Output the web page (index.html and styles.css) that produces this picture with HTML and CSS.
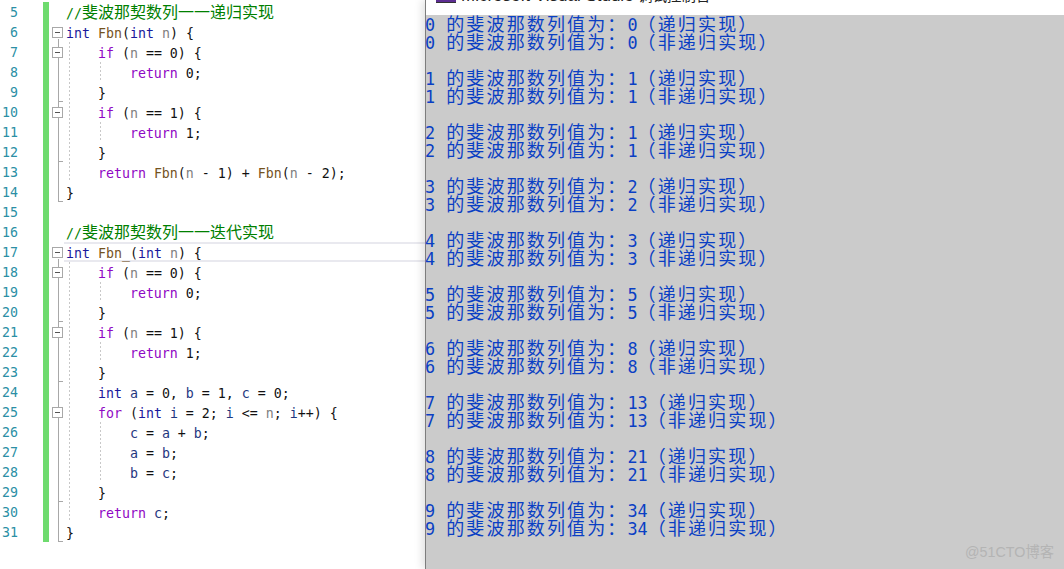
FILE: index.html
```html
<!DOCTYPE html>
<html lang="zh">
<head>
<meta charset="utf-8">
<title>Fbn</title>
<link rel="stylesheet" href="styles.css">
</head>
<body>
<main class="screen">
  <section class="editor">
    <div class="row"><span class="num">5</span><span class="bar"></span><span class="fold"></span><span class="code note"><span class="cm">//<span class="cm-zh">斐波那契数列一一递归实现</span></span></span></div>
    <div class="row"><span class="num">6</span><span class="bar"></span><span class="fold first"><i class="box"></i></span><span class="code"><span class="ty">int</span> <span class="fn">Fbn</span>(<span class="ty">int</span> <span class="pa">n</span>) {</span></div>
    <div class="row"><span class="num">7</span><span class="bar"></span><span class="fold mid"><i class="box"></i></span><span class="code g1">    <span class="kw">if</span> (<span class="pa">n</span> == 0) {</span></div>
    <div class="row"><span class="num">8</span><span class="bar"></span><span class="fold mid"></span><span class="code g12">        <span class="kw">return</span> 0;</span></div>
    <div class="row"><span class="num">9</span><span class="bar"></span><span class="fold mid end"></span><span class="code g1">    }</span></div>
    <div class="row"><span class="num">10</span><span class="bar"></span><span class="fold mid"><i class="box"></i></span><span class="code g1">    <span class="kw">if</span> (<span class="pa">n</span> == 1) {</span></div>
    <div class="row"><span class="num">11</span><span class="bar"></span><span class="fold mid"></span><span class="code g12">        <span class="kw">return</span> 1;</span></div>
    <div class="row"><span class="num">12</span><span class="bar"></span><span class="fold mid end"></span><span class="code g1">    }</span></div>
    <div class="row"><span class="num">13</span><span class="bar"></span><span class="fold mid"></span><span class="code g1">    <span class="kw">return</span> <span class="fn">Fbn</span>(<span class="pa">n</span> - 1) + <span class="fn">Fbn</span>(<span class="pa">n</span> - 2);</span></div>
    <div class="row"><span class="num">14</span><span class="bar"></span><span class="fold mid end"></span><span class="code">}</span></div>
    <div class="row"><span class="num">15</span><span class="bar"></span><span class="fold"></span><span class="code"></span></div>
    <div class="row"><span class="num">16</span><span class="bar"></span><span class="fold"></span><span class="code note"><span class="cm">//<span class="cm-zh">斐波那契数列一一迭代实现</span></span></span></div>
    <div class="row"><span class="num">17</span><span class="bar"></span><span class="fold first"><i class="box"></i></span><span class="code current"><span class="ty">int</span> <span class="fn">Fbn_</span>(<span class="ty">int</span> <span class="pa">n</span>) {</span></div>
    <div class="row"><span class="num">18</span><span class="bar"></span><span class="fold mid"><i class="box"></i></span><span class="code g1">    <span class="kw">if</span> (<span class="pa">n</span> == 0) {</span></div>
    <div class="row"><span class="num">19</span><span class="bar"></span><span class="fold mid"></span><span class="code g12">        <span class="kw">return</span> 0;</span></div>
    <div class="row"><span class="num">20</span><span class="bar"></span><span class="fold mid end"></span><span class="code g1">    }</span></div>
    <div class="row"><span class="num">21</span><span class="bar"></span><span class="fold mid"><i class="box"></i></span><span class="code g1">    <span class="kw">if</span> (<span class="pa">n</span> == 1) {</span></div>
    <div class="row"><span class="num">22</span><span class="bar"></span><span class="fold mid"></span><span class="code g12">        <span class="kw">return</span> 1;</span></div>
    <div class="row"><span class="num">23</span><span class="bar"></span><span class="fold mid end"></span><span class="code g1">    }</span></div>
    <div class="row"><span class="num">24</span><span class="bar"></span><span class="fold mid"></span><span class="code g1">    <span class="ty">int</span> <span class="lo">a</span> = 0, <span class="lo">b</span> = 1, <span class="lo">c</span> = 0;</span></div>
    <div class="row"><span class="num">25</span><span class="bar"></span><span class="fold mid"><i class="box"></i></span><span class="code g1">    <span class="kw">for</span> (<span class="ty">int</span> <span class="lo">i</span> = 2; <span class="lo">i</span> &lt;= <span class="pa">n</span>; <span class="lo">i</span>++) {</span></div>
    <div class="row"><span class="num">26</span><span class="bar"></span><span class="fold mid"></span><span class="code g12">        <span class="lo">c</span> = <span class="lo">a</span> + <span class="lo">b</span>;</span></div>
    <div class="row"><span class="num">27</span><span class="bar"></span><span class="fold mid"></span><span class="code g12">        <span class="lo">a</span> = <span class="lo">b</span>;</span></div>
    <div class="row"><span class="num">28</span><span class="bar"></span><span class="fold mid"></span><span class="code g12">        <span class="lo">b</span> = <span class="lo">c</span>;</span></div>
    <div class="row"><span class="num">29</span><span class="bar"></span><span class="fold mid end"></span><span class="code g1">    }</span></div>
    <div class="row"><span class="num">30</span><span class="bar"></span><span class="fold mid"></span><span class="code g1">    <span class="kw">return</span> <span class="lo">c</span>;</span></div>
    <div class="row"><span class="num">31</span><span class="bar"></span><span class="fold mid end"></span><span class="code">}</span></div>
  </section>
  <section class="console">
    <header class="titlebar">
      <span class="app-icon"></span>
      <span class="title">Microsoft Visual Studio <span class="title-zh">调试控制台</span></span>
    </header>
    <div class="output">
      <div class="pair"><div>0 <span class="zh">的斐波那数列值为：</span>0<span class="zh">（递归实现）</span></div><div>0 <span class="zh">的斐波那数列值为：</span>0<span class="zh">（非递归实现）</span></div></div>
      <div class="pair"><div>1 <span class="zh">的斐波那数列值为：</span>1<span class="zh">（递归实现）</span></div><div>1 <span class="zh">的斐波那数列值为：</span>1<span class="zh">（非递归实现）</span></div></div>
      <div class="pair"><div>2 <span class="zh">的斐波那数列值为：</span>1<span class="zh">（递归实现）</span></div><div>2 <span class="zh">的斐波那数列值为：</span>1<span class="zh">（非递归实现）</span></div></div>
      <div class="pair"><div>3 <span class="zh">的斐波那数列值为：</span>2<span class="zh">（递归实现）</span></div><div>3 <span class="zh">的斐波那数列值为：</span>2<span class="zh">（非递归实现）</span></div></div>
      <div class="pair"><div>4 <span class="zh">的斐波那数列值为：</span>3<span class="zh">（递归实现）</span></div><div>4 <span class="zh">的斐波那数列值为：</span>3<span class="zh">（非递归实现）</span></div></div>
      <div class="pair"><div>5 <span class="zh">的斐波那数列值为：</span>5<span class="zh">（递归实现）</span></div><div>5 <span class="zh">的斐波那数列值为：</span>5<span class="zh">（非递归实现）</span></div></div>
      <div class="pair"><div>6 <span class="zh">的斐波那数列值为：</span>8<span class="zh">（递归实现）</span></div><div>6 <span class="zh">的斐波那数列值为：</span>8<span class="zh">（非递归实现）</span></div></div>
      <div class="pair"><div>7 <span class="zh">的斐波那数列值为：</span>13<span class="zh">（递归实现）</span></div><div>7 <span class="zh">的斐波那数列值为：</span>13<span class="zh">（非递归实现）</span></div></div>
      <div class="pair"><div>8 <span class="zh">的斐波那数列值为：</span>21<span class="zh">（递归实现）</span></div><div>8 <span class="zh">的斐波那数列值为：</span>21<span class="zh">（非递归实现）</span></div></div>
      <div class="pair"><div>9 <span class="zh">的斐波那数列值为：</span>34<span class="zh">（递归实现）</span></div><div>9 <span class="zh">的斐波那数列值为：</span>34<span class="zh">（非递归实现）</span></div></div>
    </div>
    <div class="watermark">@51CTO博客</div>
  </section>
</main>
</body>
</html>
```
FILE: styles.css
```css
* { box-sizing: border-box; }
html, body { margin: 0; height: 569px; overflow: hidden; background: #fff; }

.screen { display: flex; width: 1064px; height: 569px; }

/* Code editor */
.editor {
  flex: 0 0 425px;
  padding-top: 2px;
  font: 13.28px/20px "DejaVu Sans Mono", "Noto Sans CJK SC", monospace;
  color: #111;
  overflow: hidden;
}
.row { display: flex; height: 20px; }
.num {
  flex: 0 0 18px;
  margin-right: 25px;
  text-align: right;
  line-height: 22px;
  color: #2b8fa5;
}
.bar { flex: 0 0 6px; background: #6edb6e; }
.fold {
  flex: 0 0 15px;
  display: flex;
  align-items: center;
  padding-left: 3px;
  background-repeat: no-repeat;
}
.fold.first {
  background-image: linear-gradient(#a8a8a8, #a8a8a8);
  background-position: 9px 17px;
  background-size: 1px 3px;
}
.fold.mid {
  background-image: linear-gradient(#a8a8a8, #a8a8a8);
  background-position: 9px 0;
  background-size: 1px 100%;
}
.fold.mid.end {
  background-image: linear-gradient(#a8a8a8, #a8a8a8), linear-gradient(#a8a8a8, #a8a8a8);
  background-position: 9px 0, 9px 19px;
  background-size: 1px 100%, 5px 1px;
}
.box {
  flex: 0 0 11px;
  height: 11px;
  border: 1px solid #a8a8a8;
  background: linear-gradient(#555, #555) 2px 4px / 5px 1px no-repeat, #fff;
}
.code {
  flex: 1;
  height: 20px;
  padding-left: 2px;
  line-height: 23px;
  white-space: pre;
  background-repeat: repeat-y;
}
.code.note { line-height: 18px; }
.g1 {
  background-image: linear-gradient(#c8c8c8 50%, transparent 50%);
  background-position: 5px 0;
  background-size: 1px 4px;
}
.g12 {
  background-image: linear-gradient(#c8c8c8 50%, transparent 50%), linear-gradient(#c8c8c8 50%, transparent 50%);
  background-position: 5px 0, 36px 0;
  background-size: 1px 4px, 1px 4px;
}
.code.current {
  border-top: 2px solid #e9e9ef;
  border-bottom: 2px solid #e9e9ef;
  line-height: 19px;
}

.ty { color: #1a1a9c; }
.kw { color: #8f08c4; }
.fn { color: #74531f; }
.pa { color: #808080; }
.lo { color: #1f377f; }
.cm { color: #008000; }
.cm-zh { font-size: 16px; font-family: "Noto Sans CJK SC", sans-serif; line-height: 18px; }

/* Debug console */
.console {
  position: relative;
  flex: 1;
  display: flex;
  flex-direction: column;
  min-width: 0;
  background: #cbcbcb;
  border-left: 1px solid #7d7d7d;
  box-shadow: -3px 0 8px rgba(0, 0, 0, .12);
}
.titlebar {
  position: relative;
  z-index: 1;
  flex: 0 0 15px;
  display: flex;
  align-items: flex-start;
  gap: 5px;
  padding-left: 10px;
  background: #fff;
  overflow: hidden;
}
.app-icon {
  flex: 0 0 20px;
  height: 3px;
  background: #5c2d91;
  border-bottom: 1px solid #333;
}
.title {
  margin-top: -14px;
  font: 17px/20px "Liberation Sans", "Noto Sans CJK SC", sans-serif;
  color: #222;
  white-space: nowrap;
}
.title-zh { font-size: 14.4px; }
.output {
  flex: 1;
  margin: -1px 0 0 -1px;
  font: 16.8px/18px "DejaVu Sans Mono", "Noto Sans CJK SC", monospace;
  color: #0a3fc4;
  overflow: hidden;
}
.pair { margin-bottom: 18px; }
.pair > div { height: 18px; white-space: pre; }
.zh {
  font-family: "Noto Sans CJK SC", sans-serif;
  font-size: 18px;
  letter-spacing: 2.14px;
  line-height: 18px;
}
.zh:first-of-type { margin-left: 1px; }
.watermark {
  position: absolute;
  right: 10px;
  bottom: 9px;
  font: 14.3px/16px "Liberation Sans", "Noto Sans CJK SC", sans-serif;
  color: #b4b4b4;
}
```
